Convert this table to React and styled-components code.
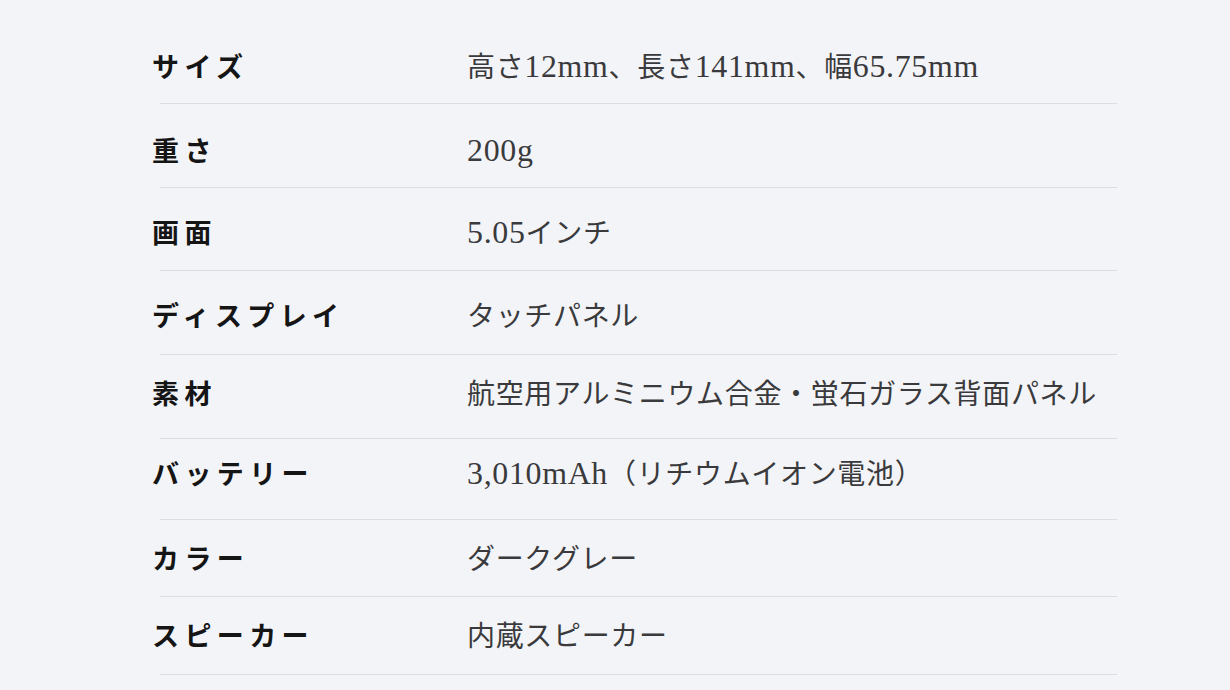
import styled, { createGlobalStyle } from "styled-components";

const GlobalStyle = createGlobalStyle`
  html, body {
    margin: 0;
    padding: 0;
    background: #f3f4f8;
  }
  body {
    font-family: "Liberation Serif", "Noto Sans CJK JP", serif;
    -webkit-font-smoothing: antialiased;
  }
`;

const Page = styled.div`
  width: 1230px;
  height: 690px;
  overflow: hidden;
  background: #f3f4f8;
  padding: 20px 0 0 152px;
  box-sizing: border-box;
`;

const SpecTable = styled.dl`
  display: flex;
  flex-direction: column;
  width: 965px;
  margin: 0;
`;

// shift > 0 pushes the text down, < 0 pulls it up
const SpecRow = styled.div`
  display: grid;
  grid-template-columns: 307px 1fr;
  align-items: center;
  margin-left: 8px;
  height: ${(p) => p.$height}px;
  padding-top: ${(p) => Math.max(p.$shift, 0)}px;
  padding-bottom: ${(p) => Math.max(-p.$shift, 0)}px;
  box-sizing: border-box;
  border-bottom: 1px solid #dcdde3;
`;

const Label = styled.dt`
  margin-left: -8px;
  font-size: 27px;
  font-weight: 700;
  letter-spacing: 0.2em;
  color: #151515;
  white-space: nowrap;
`;

const Value = styled.dd`
  margin: 0;
  padding-top: 5px;
  font-size: 28px;
  line-height: 40px;
  font-weight: 400;
  letter-spacing: 0.024em;
  color: #3a3a3c;
  white-space: nowrap;
`;

const Latin = styled.span`
  font-size: 1.14em;
  line-height: 1;
`;

const specs = [
  { label: "サイズ", value: "高さ12mm、長さ141mm、幅65.75mm", height: 84, shift: 8 },
  { label: "重さ", value: "200g", height: 84, shift: 8 },
  { label: "画面", value: "5.05インチ", height: 83, shift: 5 },
  { label: "ディスプレイ", value: "タッチパネル", height: 84, shift: 4 },
  { label: "素材", value: "航空用アルミニウム合金・蛍石ガラス背面パネル", height: 84, shift: -8 },
  { label: "バッテリー", value: "3,010mAh（リチウムイオン電池）", height: 81, shift: -14 },
  { label: "カラー", value: "ダークグレー", height: 77, shift: -2 },
  { label: "スピーカー", value: "内蔵スピーカー", height: 78, shift: -2 },
];

const renderValue = (text) =>
  text.split(/([0-9A-Za-z.,]+)/).map((part, i) =>
    i % 2 === 1 ? <Latin key={i}>{part}</Latin> : part
  );

export default function App() {
  return (
    <>
      <GlobalStyle />
      <Page>
        <SpecTable>
          {specs.map((s) => (
            <SpecRow key={s.label} $height={s.height} $shift={s.shift}>
              <Label>{s.label}</Label>
              <Value>{renderValue(s.value)}</Value>
            </SpecRow>
          ))}
        </SpecTable>
      </Page>
    </>
  );
}
